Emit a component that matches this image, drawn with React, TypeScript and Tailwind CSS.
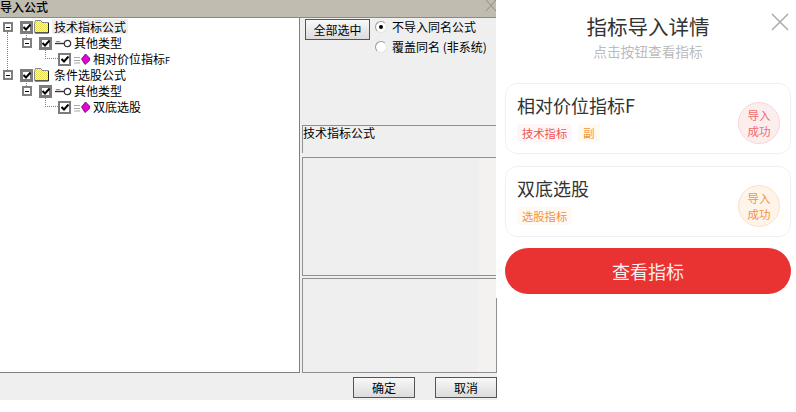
const Expander = () => (
  <div className="flex h-[10px] w-[10px] shrink-0 items-center justify-center border-2 border-[#808080] bg-white">
    <div className="h-px w-1 shrink-0 bg-black" />
  </div>
);

const Check = ({ thin }: { thin?: boolean }) => (
  <div className={`flex h-[13px] w-[13px] shrink-0 items-center justify-center border-[#7c7c7c] bg-white ${thin ? "border-2" : "border-[3px]"}`}>
    <svg width="8" height="7" viewBox="0 0 8 7" className="shrink-0">
      <path d="M0.5 3 L3 5.5 L7.5 0.5" fill="none" stroke="#000" strokeWidth="2" />
    </svg>
  </div>
);

const Folder = () => (
  <svg width="15" height="14" viewBox="0 0 15 14" className="shrink-0">
    <defs>
      <pattern id="dither" width="2" height="2" patternUnits="userSpaceOnUse">
        <rect width="2" height="2" fill="#fdfbb0" />
        <rect width="1" height="1" fill="#e6dc50" />
        <rect x="1" y="1" width="1" height="1" fill="#e6dc50" />
      </pattern>
    </defs>
    <path d="M0.5 3.5 L1.5 0.5 L7 0.5 L8 2.5 L14.5 2.5 L14.5 12.5 L0.5 12.5 Z" fill="url(#dither)" stroke="#8a8a8a" />
    <path d="M14.5 3 L14.5 13 L1 13" fill="none" stroke="#222" />
  </svg>
);

const KeyIcon = () => (
  <svg width="17" height="9" viewBox="0 0 17 9" className="shrink-0">
    <circle cx="12.5" cy="4.5" r="3.2" fill="#fff" stroke="#333" strokeWidth="1.2" />
    <path d="M0 4.5 L9 4.5" stroke="#333" strokeWidth="1.4" fill="none" />
    <path d="M1 2.5 L5 2.5" stroke="#888" />
  </svg>
);

const FormulaIcon = () => (
  <svg width="17" height="12" viewBox="0 0 17 12" className="shrink-0">
    <path d="M0 4.5 H6 M0 7.5 H6 M0 10 H6" stroke="#aaa" />
    <path d="M7.5 6 L11.5 1 L15.5 5 L15.5 7.5 L11 11.5 Z" fill="#e800d8" stroke="#5a005a" strokeWidth="0.8" />
  </svg>
);

const Radio = ({ on }: { on?: boolean }) => (
  <div className="flex h-3 w-3 items-center justify-center rounded-full border border-t-[#999] border-l-[#999] border-r-[#e4e4e4] border-b-[#e4e4e4] bg-white">
    {on && <div className="h-1 w-1 rounded-full bg-black" />}
  </div>
);

const WinButton = ({ label, className }: { label: string; className: string }) => (
  <button className={`h-[21px] border border-[#555] bg-gradient-to-b from-[#f8f8f8] to-[#dcdcdc] text-xs text-black ${className}`}>
    {label}
  </button>
);

const Card = ({
  title,
  tags,
  tone,
}: {
  title: string;
  tags: { label: string; className: string }[];
  tone: string;
}) => (
  <div className="flex h-[71px] w-[286px] items-center justify-between rounded-xl border border-[#f1f1f1] bg-white pl-[11px] pr-[10px]">
    <div>
      <div className="-mt-[2px] text-[18px] leading-[24px] text-[#333]">{title}</div>
      <div className="mt-[7px] flex gap-[6px]">
        {tags.map((t) => (
          <span key={t.label} className={`rounded px-[5px] text-[11.3px] leading-[18px] ${t.className}`}>
            {t.label}
          </span>
        ))}
      </div>
    </div>
    <div className={`mt-[8px] flex h-[42px] w-[42px] items-center justify-center rounded-full border text-center text-[11.5px] leading-[16px] ${tone}`}>
      导入
      <br />
      成功
    </div>
  </div>
);

export default function App() {
  return (
    <div className="relative h-[412px] w-[796px] overflow-hidden bg-white font-['Noto_Sans_CJK_SC','Noto_Sans',sans-serif]">
      {/* old windows dialog */}
      <div className="flex h-[400px] w-[497px] flex-col bg-[#efefef] text-xs text-black">
        <div className="flex h-[18px] shrink-0 items-start justify-between border-b border-[#8a8a80] bg-[#c0bcb0] pr-px">
          <div className="text-xs font-medium leading-[13px]">导入公式</div>
          <svg width="10" height="11" viewBox="0 0 10 11">
            <path d="M0 11 L10 0 M0 0 L10 11" stroke="#8f8c84" />
          </svg>
        </div>

        <div className="flex h-[355px] shrink-0">
          <div className="relative h-full w-[300px] shrink-0 border-r border-b border-[#808080] bg-white pt-px">
            <div className="absolute left-[7px] top-[14px] h-[38px] border-l border-dotted border-[#808080]" />
            <div className="absolute left-[26px] top-[14px] h-[8px] border-l border-dotted border-[#808080]" />
            <div className="absolute left-[45px] top-[31px] h-[10px] w-[13px] border-l border-b border-dotted border-[#808080]" />
            <div className="absolute left-[26px] top-[62px] h-[8px] border-l border-dotted border-[#808080]" />
            <div className="absolute left-[45px] top-[79px] h-[10px] w-[13px] border-l border-b border-dotted border-[#808080]" />

            <div className="flex h-4 items-center pl-[3px]">
              <Expander />
              <div className="ml-[7px]"><Check /></div>
              <div className="ml-[1px]"><Folder /></div>
              <span className="ml-[3px] bg-[#eeeeee] px-[2px] leading-[15px] -translate-y-px">技术指标公式</span>
            </div>
            <div className="flex h-4 items-center pl-[22px]">
              <Expander />
              <div className="ml-[7px]"><Check /></div>
              <div className="ml-[3px]"><KeyIcon /></div>
              <span className="ml-[2px]">其他类型</span>
            </div>
            <div className="flex h-4 items-center pl-[58px]">
              <Check thin />
              <div className="ml-[3px]"><FormulaIcon /></div>
              <span className="ml-[2px]">相对价位指标<span className="text-[9px]">F</span></span>
            </div>
            <div className="flex h-4 items-center pl-[3px]">
              <Expander />
              <div className="ml-[7px]"><Check /></div>
              <div className="ml-[1px]"><Folder /></div>
              <span className="ml-[5px]">条件选股公式</span>
            </div>
            <div className="flex h-4 items-center pl-[22px]">
              <Expander />
              <div className="ml-[7px]"><Check /></div>
              <div className="ml-[3px]"><KeyIcon /></div>
              <span className="ml-[2px]">其他类型</span>
            </div>
            <div className="flex h-4 items-center pl-[58px]">
              <Check thin />
              <div className="ml-[3px]"><FormulaIcon /></div>
              <span className="ml-[2px]">双底选股</span>
            </div>
          </div>

          <div className="flex min-w-0 flex-1 flex-col pl-[2px]">
            <div className="flex h-[107px] shrink-0 items-start pl-[3px] pt-px">
              <WinButton label="全部选中" className="w-[65px]" />
              <div className="ml-[5px] flex flex-col gap-[4px]">
                <div className="flex h-4 items-center gap-[5px]"><Radio on /><span>不导入同名公式</span></div>
                <div className="flex h-4 items-center gap-[5px]"><Radio /><span>覆盖同名 (非系统)</span></div>
              </div>
            </div>
            <div className="h-[28px] shrink-0 border-t border-l border-[#909090] leading-[14px]">技术指标公式</div>
            <div className="mt-[4px] flex h-[119px] shrink-0 border-t border-l border-b border-[#909090]">
              <div className="mt-[3px] ml-[3px] flex-1 bg-[#efefef]" />
              <div className="w-[18px] bg-[#f3f2f0]" />
            </div>
            <div className="mt-[2px] flex flex-1 border border-[#909090]">
              <div className="mt-[3px] ml-[3px] flex-1 bg-[#efefef]" />
              <div className="w-[18px] bg-[#f3f2f0]" />
            </div>
          </div>
        </div>

        <div className="flex flex-1 items-start justify-end gap-5 pt-1">
          <WinButton label="确定" className="w-[62px]" />
          <WinButton label="取消" className="w-[62px]" />
        </div>
      </div>

      {/* detail sheet laid over the dialog */}
      <div className="absolute left-[496px] top-0 flex h-[298px] w-[300px] flex-col items-center bg-white pl-[9px] pr-[5px]">
        <div className="pt-[12px] text-[20.5px] leading-[28px] text-[#333]">指标导入详情</div>
        <div className="mt-px text-[13.7px] leading-[20px] text-[#bbb]">点击按钮查看指标</div>
        <svg width="18" height="18" viewBox="0 0 18 18" className="absolute left-[275px] top-[13px]">
          <path d="M1 1 L17 17 M17 1 L1 17" stroke="#aaa" strokeWidth="1.5" />
        </svg>
        <div className="mt-[22px] flex flex-col gap-3">
          <Card
            title="相对价位指标F"
            tone="border-[#fbd5d5] bg-[#fdeeee] text-[#ee6a6a]"
            tags={[
              { label: "技术指标", className: "bg-[#fef6f6] text-[#ee5555]" },
              { label: "副", className: "bg-[#fff9f4] text-[#f5923c]" },
            ]}
          />
          <Card
            title="双底选股"
            tone="border-[#fde0c6] bg-[#fff4ea] text-[#f5923c]"
            tags={[{ label: "选股指标", className: "bg-[#fff9f4] text-[#f5923c]" }]}
          />
        </div>
        <button className="mt-[11px] h-[46px] w-[286px] shrink-0 rounded-full bg-[#e93232] text-[18px] text-[#fdeeee]">
          查看指标
        </button>
      </div>
    </div>
  );
}
